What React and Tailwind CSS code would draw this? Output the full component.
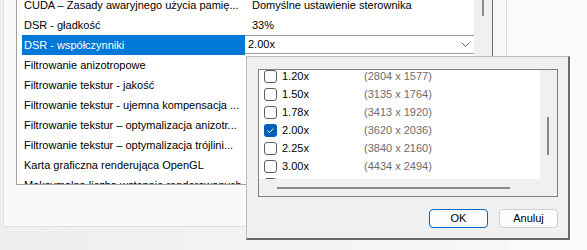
import React from "react";

const rows = [
  ["CUDA – Zasady awaryjnego użycia pamię...", "Domyślne ustawienie sterownika"],
  ["DSR - gładkość", "33%"],
  ["DSR - współczynniki", "2.00x", true],
  ["Filtrowanie anizotropowe", ""],
  ["Filtrowanie tekstur - jakość", ""],
  ["Filtrowanie tekstur - ujemna kompensacja ...", ""],
  ["Filtrowanie tekstur – optymalizacja anizotr...", ""],
  ["Filtrowanie tekstur – optymalizacja trójlini...", ""],
  ["Karta graficzna renderująca OpenGL", ""],
  ["Maksymalna liczba wstępnie renderowanych klatek", ""],
];

const factors = [
  ["1.20x", "(2804 x 1577)"],
  ["1.50x", "(3135 x 1764)"],
  ["1.78x", "(3413 x 1920)"],
  ["2.00x", "(3620 x 2036)", true],
  ["2.25x", "(3840 x 2160)"],
  ["3.00x", "(4434 x 2494)"],
  ["4.00x", "(5120 x 2880)"],
];

function Row({ label, value, selected }) {
  return (
    <div className="flex h-[20px] shrink-0 items-stretch">
      <div
        className={
          "ml-[5px] flex w-[223px] items-center overflow-hidden whitespace-nowrap pl-[2px] " +
          (selected ? "bg-[#0078d7] text-white" : "text-black")
        }
      >
        {label}
      </div>
      {selected ? (
        <div className="flex h-[19px] w-[229px] items-center justify-between border-y border-[#9a9a9a] bg-white pl-[3px] pr-[4px] text-black">
          <span>{value}</span>
          <svg width="9" height="6" viewBox="0 0 9 6" className="mt-[1px]">
            <polyline points="0.5,0.5 4.5,4.5 8.5,0.5" fill="none" stroke="#5a5a5a" strokeWidth="1" />
          </svg>
        </div>
      ) : (
        <div className="flex w-[229px] items-center whitespace-nowrap pl-[7px] text-black">{value}</div>
      )}
    </div>
  );
}

function Check({ checked }) {
  if (checked) {
    return (
      <div className="flex h-[13px] w-[13px] shrink-0 items-center justify-center rounded-[3px] bg-[#005fb8]">
        <svg width="9" height="7" viewBox="0 0 9 7">
          <polyline points="1.5,3.5 3.5,5.5 7.5,1.5" fill="none" stroke="white" strokeWidth="1" />
        </svg>
      </div>
    );
  }
  return <div className="h-[13px] w-[13px] shrink-0 rounded-[3px] border border-[#5f5f5f] bg-white" />;
}

export default function App() {
  return (
    <div
      className="relative h-[250px] w-[587px] overflow-hidden bg-gradient-to-r from-[#eeeeee] to-[#f9f9f9] text-[11px] leading-none"
      style={{ fontFamily: '"Segoe UI", "Liberation Sans", Arial, sans-serif' }}
    >
      <div className="flex">
        {/* main panel */}
        <div className="ml-[3px] h-[227px] w-[504px] shrink-0 border-x border-b border-[#e0e0e0] bg-[#f9f9f9] pl-[12px]">
          <div className="-mt-[6px] flex h-[191px] w-[477px] border-b border-l border-r border-[#a0a0a0] border-r-[#6a6a6a] bg-white">
            <div className="flex w-[457px] flex-col overflow-hidden pt-[1px]">
              {rows.map(([l, v, s], i) => (
                <Row key={i} label={l} value={v} selected={s} />
              ))}
            </div>
            <div className="relative w-[18px] shrink-0 bg-[#f0f0f0]">
              <div className="ml-[8px] mt-[6px] h-[16px] w-[2px] bg-[#8a8a8a]" />
            </div>
          </div>
        </div>
        <div className="h-[250px] flex-1 bg-[#fafafa]" />
      </div>

      {/* popup */}
      <div className="absolute left-[246px] top-[56px] flex h-[184px] w-[324px] flex-col border-l border-t border-[#bdbdbd] border-r-2 border-b-2 border-r-[#6a6a6a] border-b-[#6a6a6a] bg-[#f0f0f0] pl-[11px] pr-[10px] pt-[12px]">
        <div className="flex h-[128px] w-[300px] flex-col border border-[#828282] bg-[#f0f0f0]">
          <div className="flex h-[109px]">
            <div className="flex w-[281px] flex-col overflow-hidden bg-white">
              <div className="-mt-[3px] flex flex-col">
                {factors.map(([f, r, c], i) => (
                  <div key={i} className="flex h-[18px] shrink-0 items-center pl-[5px]">
                    <Check checked={c} />
                    <span className="ml-[5px] w-[82px] text-black">{f}</span>
                    <span className="text-[#6d6d6d]">{r}</span>
                  </div>
                ))}
              </div>
            </div>
            <div className="w-[17px] shrink-0 bg-[#f0f0f0]">
              <div className="ml-[7px] mt-[47px] h-[38px] w-[2px] bg-[#8a8a8a]" />
            </div>
          </div>
          <div className="flex h-[17px] items-center bg-[#f0f0f0]">
            <div className="ml-[18px] h-[2px] w-[233px] bg-[#8a8a8a]" />
          </div>
        </div>
        <div className="mt-[12px] flex w-[300px] justify-end gap-[11px]">
          <button className="flex h-[19px] w-[59px] items-center justify-center rounded-[4px] border border-[#0067c0] bg-[#fdfdfd] text-black">
            OK
          </button>
          <button className="flex h-[19px] w-[59px] items-center justify-center rounded-[4px] border border-[#d0d0d0] bg-[#fdfdfd] text-black">
            Anuluj
          </button>
        </div>
      </div>
    </div>
  );
}
